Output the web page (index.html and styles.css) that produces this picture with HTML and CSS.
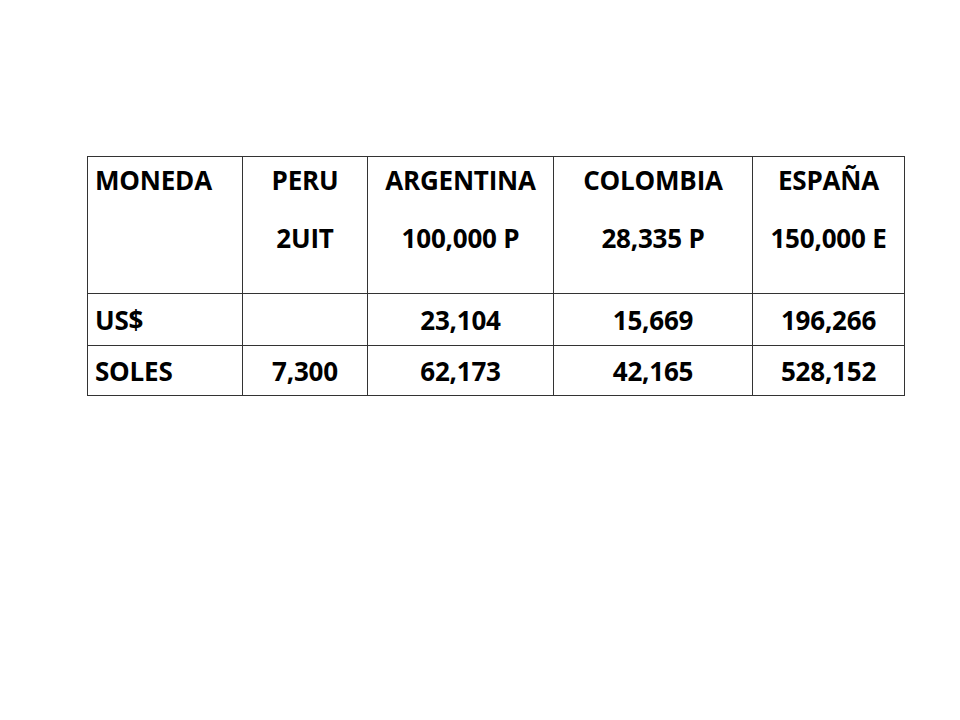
FILE: index.html
```html
<!DOCTYPE html>
<html lang="es">
<head>
<meta charset="utf-8">
<title>Moneda</title>
<link rel="stylesheet" href="styles.css">
</head>
<body>
<main class="slide">
  <table class="grid">
    <colgroup>
      <col class="c1"><col class="c2"><col class="c3"><col class="c4"><col class="c5">
    </colgroup>
    <tr class="head">
      <td class="label">MONEDA</td>
      <td><div class="l1">PERU</div><div class="l2">2UIT</div></td>
      <td><div class="l1">ARGENTINA</div><div class="l2">100,000 P</div></td>
      <td><div class="l1">COLOMBIA</div><div class="l2">28,335 P</div></td>
      <td><div class="l1">ESPAÑA</div><div class="l2">150,000 E</div></td>
    </tr>
    <tr class="row r1">
      <td class="label">US$</td>
      <td></td>
      <td>23,104</td>
      <td>15,669</td>
      <td>196,266</td>
    </tr>
    <tr class="row r2">
      <td class="label">SOLES</td>
      <td>7,300</td>
      <td>62,173</td>
      <td>42,165</td>
      <td>528,152</td>
    </tr>
  </table>
</main>
</body>
</html>
```

FILE: styles.css
```css
html, body {
  margin: 0;
  padding: 0;
  background: #ffffff;
}
.slide {
  width: 960px;
  height: 720px;
  padding: 156px 0 0 87px;
  box-sizing: border-box;
}
.grid {
  border-collapse: collapse;
  table-layout: fixed;
  width: 817px;
  font-family: "Open Sans", "Liberation Sans", sans-serif;
  font-weight: 700;
  font-size: 26px;
  letter-spacing: -0.2px;
  color: #000000;
}
.c1 { width: 155px; }
.c2 { width: 125px; }
.c3 { width: 186px; }
.c4 { width: 199px; }
.c5 { width: 152px; }
.grid td {
  border: 1px solid #333333;
  text-align: center;
  vertical-align: top;
  padding: 0;
  line-height: 30px;
  white-space: nowrap;
}
.grid td.label {
  text-align: left;
  padding-left: 7px;
}
.head td {
  height: 137px;
  padding-top: 8px;
  box-sizing: border-box;
}
.l2 {
  margin-top: 28px;
}
.row td {
  vertical-align: middle;
}
.r1 td { height: 51px; }
.r2 td { height: 49px; }
```
